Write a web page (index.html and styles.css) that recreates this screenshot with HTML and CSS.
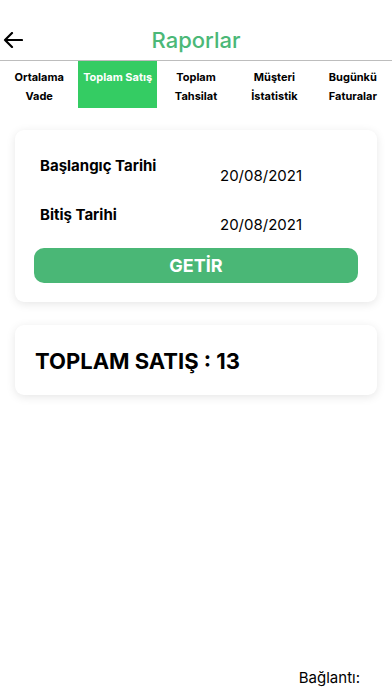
FILE: index.html
```html
<!DOCTYPE html>
<html lang="tr">
<head>
    <meta charset="UTF-8">
    <meta name="viewport" content="width=device-width, initial-scale=1.0">
    <title>Raporlar</title>
    <link rel="stylesheet" href="styles.css">
</head>
<body>

<div class="header">
    <span class="back">
        <svg width="20" height="16" viewBox="0 0 20 16"><path d="M19 8H2M9 1L2 8l7 7" fill="none" stroke="#000" stroke-width="2.2" stroke-linecap="round" stroke-linejoin="round"/></svg>
    </span>
    <h1>Raporlar</h1>
</div>

<div class="tabs">
    <div class="tab">Ortalama<br>Vade</div>
    <div class="tab active">Toplam Satış</div>
    <div class="tab">Toplam<br>Tahsilat</div>
    <div class="tab">Müşteri<br>İstatistik</div>
    <div class="tab">Bugünkü<br>Faturalar</div>
</div>

<div class="card form-card">
    <div class="date-row">
        <span class="label">Başlangıç Tarihi</span>
        <span class="date">20/08/2021</span>
    </div>
    <div class="date-row">
        <span class="label">Bitiş Tarihi</span>
        <span class="date">20/08/2021</span>
    </div>
    <button class="fetch-btn">GETİR</button>
</div>

<div class="card total-card">
    TOPLAM SATIŞ : 13
</div>

<div class="footer">Bağlantı:</div>

</body>
</html>
```

FILE: styles.css
```css
body {
    margin: 0;
    width: 392px;
    height: 696px;
    font-family: "Inter", "Liberation Sans", sans-serif;
    background: #fff;
    color: #000;
    display: flex;
    flex-direction: column;
}
.header {
    height: 61px;
    display: flex;
    align-items: flex-end;
    justify-content: center;
    position: relative;
    border-bottom: 1px solid #bdbdbd;
    padding-bottom: 7px;
    box-sizing: border-box;
}
.header h1 {
    margin: 0;
    font-size: 22px;
    font-weight: 500;
    color: #4bb877;
}
.back {
    position: absolute;
    left: 3px;
    top: 32px;
}
.tabs {
    display: flex;
    height: 47px;
}
.tab {
    flex: 1;
    text-align: center;
    font-size: 11px;
    font-weight: 700;
    line-height: 19px;
    padding-top: 7px;
}
.tab.active {
    background-color: #34cc63;
    color: #fff;
}
.card {
    margin: 0 15px;
    background: #fff;
    border-radius: 9px;
    box-shadow: 0 2px 10px rgba(0, 0, 0, 0.1);
}
.form-card {
    margin-top: 22px;
    padding: 26px 19px 19px 19px;
}
.date-row {
    display: flex;
    height: 49px;
}
.label {
    width: 180px;
    padding-left: 6px;
    font-size: 15px;
    font-weight: 700;
}
.date {
    padding-top: 10px;
    font-size: 15px;
}
.fetch-btn {
    display: block;
    width: 100%;
    height: 35px;
    margin-top: -6px;
    border: none;
    border-radius: 10px;
    background-color: #4ab776;
    color: #fff;
    font-family: inherit;
    font-size: 18px;
    font-weight: 700;
}
.total-card {
    margin-top: 23px;
    height: 70px;
    display: flex;
    align-items: center;
    padding-left: 20px;
    padding-top: 2px;
    box-sizing: border-box;
    font-size: 22px;
    font-weight: 700;
}
.footer {
    margin-top: auto;
    margin-bottom: 9px;
    align-self: flex-end;
    margin-right: 32px;
    font-size: 15px;
}
```
